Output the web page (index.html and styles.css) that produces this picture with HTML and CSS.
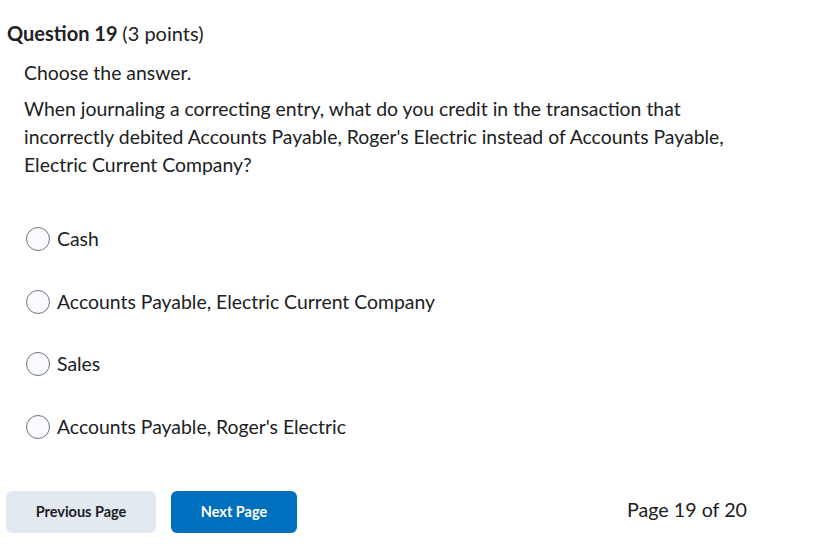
FILE: index.html
```html
<!DOCTYPE html>
<html lang="en">
<head>
    <meta charset="UTF-8">
    <title>Question 19</title>
    <link rel="stylesheet" href="styles.css">
</head>
<body>
    <div class="question">
        <h2 class="question-title">Question 19 <span class="points">(3 points)</span></h2>
        <div class="question-body">
            <p>Choose the answer.</p>
            <p>When journaling a correcting entry, what do you credit in the transaction that incorrectly debited Accounts Payable, Roger's Electric instead of Accounts Payable, Electric Current Company?</p>
        </div>

        <div class="options">
            <label class="option"><span class="radio"></span>Cash</label>
            <label class="option"><span class="radio"></span>Accounts Payable, Electric Current Company</label>
            <label class="option"><span class="radio"></span>Sales</label>
            <label class="option"><span class="radio"></span>Accounts Payable, Roger's Electric</label>
        </div>
    </div>

    <div class="pager">
        <button class="btn btn-prev">Previous Page</button>
        <button class="btn btn-next">Next Page</button>
        <span class="page-count">Page 19 of 20</span>
    </div>
</body>
</html>
```

FILE: styles.css
```css
* {
    margin: 0;
    padding: 0;
    box-sizing: border-box;
    font-family: 'Lato', 'Liberation Sans', sans-serif;
}

body {
    background: #ffffff;
    color: #202122;
    padding: 20px 0 0 7px;
    width: 814px;
}

.question-title {
    font-size: 20px;
    font-weight: 700;
    line-height: 26px;
    color: #202122;
}

.points {
    font-weight: 400;
}

.question-body {
    padding: 13px 0 0 17px;
    width: 727px;
    font-size: 19.4px;
    line-height: 28px;
}

.question-body p {
    margin-bottom: 8px;
}

.options {
    padding: 38px 0 0 19px;
    display: flex;
    flex-direction: column;
    gap: 34.5px;
}

.option {
    display: flex;
    align-items: center;
    gap: 7px;
    font-size: 19.4px;
    line-height: 28px;
}

.radio {
    width: 24px;
    height: 24px;
    border: 1px solid #6e7477;
    border-radius: 50%;
    background: #f9fbff;
}

.pager {
    display: flex;
    align-items: center;
    margin-top: 50px;
    width: 740px;
}

.btn {
    height: 42px;
    border: none;
    border-radius: 6px;
    font-size: 14.5px;
    font-weight: 700;
    cursor: pointer;
}

.btn-prev {
    width: 150px;
    margin-left: -1px;
    background: #e3e9f1;
    color: #202122;
}

.btn-next {
    width: 126px;
    margin-left: 15px;
    background: #006fbe;
    color: #ffffff;
}

.page-count {
    margin-left: auto;
    margin-bottom: 4px;
    font-size: 19.7px;
}
```
